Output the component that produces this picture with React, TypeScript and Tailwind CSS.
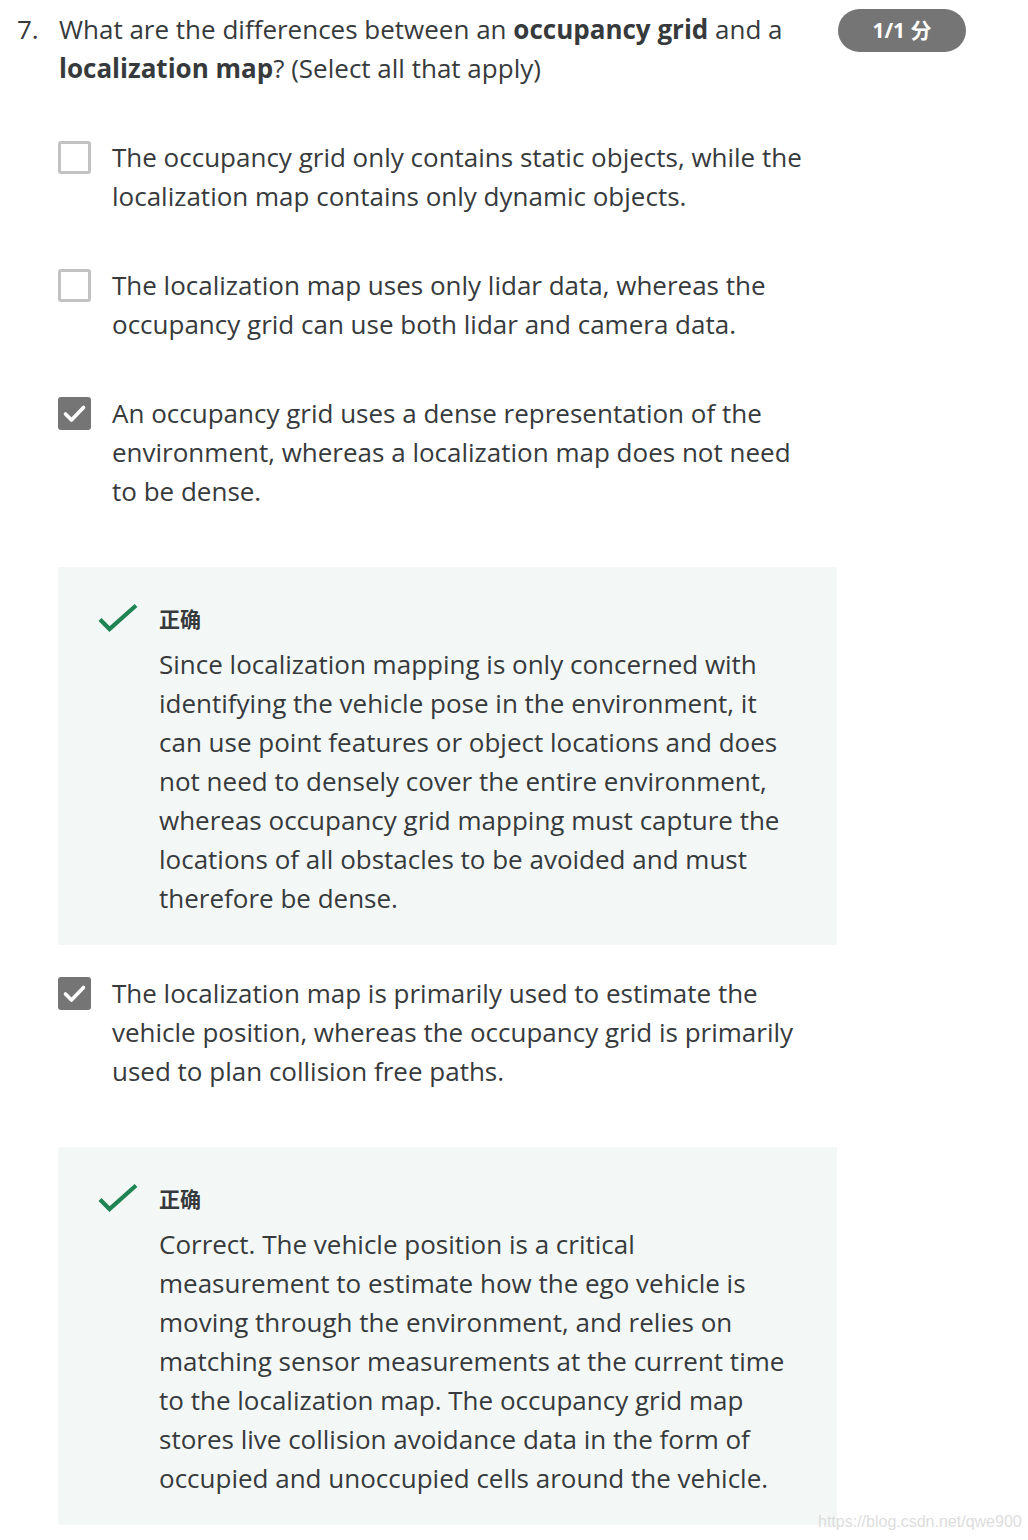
import React from "react";

type Option = {
    text: string;
    checked: boolean;
    feedback?: string;
};

const options: Option[] = [
    {
        text: "The occupancy grid only contains static objects, while the localization map contains only dynamic objects.",
        checked: false,
    },
    {
        text: "The localization map uses only lidar data, whereas the occupancy grid can use both lidar and camera data.",
        checked: false,
    },
    {
        text: "An occupancy grid uses a dense representation of the environment, whereas a localization map does not need to be dense.",
        checked: true,
        feedback:
            "Since localization mapping is only concerned with identifying the vehicle pose in the environment, it can use point features or object locations and does not need to densely cover the entire environment, whereas occupancy grid mapping must capture the locations of all obstacles to be avoided and must therefore be dense.",
    },
    {
        text: "The localization map is primarily used to estimate the vehicle position, whereas the occupancy grid is primarily used to plan collision free paths.",
        checked: true,
        feedback:
            "Correct. The vehicle position is a critical measurement to estimate how the ego vehicle is moving through the environment, and relies on matching sensor measurements at the current time to the localization map. The occupancy grid map stores live collision avoidance data in the form of occupied and unoccupied cells around the vehicle.",
    },
];

const Checkbox = ({checked}: {checked: boolean}) => {
    if (!checked)
        return <div className="w-[33px] h-[33px] shrink-0 rounded-[3px] border-[3px] border-[#c2c2c2] bg-white"/>;
    return (
        <div className="w-[33px] h-[33px] shrink-0 rounded-[3px] bg-[#757575] flex items-center justify-center">
            <svg width="33" height="33" viewBox="0 0 33 33" fill="none">
                <path d="M7.5 17L13.5 23L25.5 10.5" stroke="white" strokeWidth="3.6" strokeLinecap="round" strokeLinejoin="round"/>
            </svg>
        </div>
    );
};

const Feedback = ({text}: {text: string}) => (
    <div className="mt-[56px] w-[779px] bg-[#f3f8f6] pl-[40px] pt-[30px] pb-[27px]">
        <div className="flex h-[44px] items-center">
            <div className="w-[61px] shrink-0">
                <svg width="40" height="32" viewBox="0 0 40 32" fill="none">
                    <path d="M2 16.5L11.5 26L38 2.5" stroke="#1f8354" strokeWidth="4.2"/>
                </svg>
            </div>
            <span className="text-[21px] font-bold text-[#373a3c] [font-family:'Noto_Sans_CJK_SC',sans-serif]">正确</span>
        </div>
        <p className="mt-[4px] ml-[61px] w-[634px] text-[26px] leading-[39px] text-[#373a3c]">{text}</p>
    </div>
);

export default function App() {
    return (
        <div className="relative min-h-[1540px] bg-white [font-family:'Open_Sans','Noto_Sans_CJK_SC',sans-serif] text-[#373a3c]">
            <div className="pt-[10px] pl-[17px]">
                <div className="flex items-start">
                    <span className="w-[42px] shrink-0 text-[26px] leading-[39px]">7.</span>
                    <p className="w-[753px] text-[26px] leading-[39px]">
                        What are the differences between an <b className="font-bold">occupancy grid</b> and a <b className="font-bold">localization map</b>? (Select all that apply)
                    </p>
                    <div className="ml-[26px] mt-[-1px] h-[43px] w-[128px] rounded-full bg-[#757575] flex items-center justify-center text-white font-bold text-[21px]">
                        1/1 分
                    </div>
                </div>

                <div className="pl-[41px]">
                    {options.map((o, i) => (
                        <div key={i}>
                            <div className={`flex items-start gap-[21px] ${i > 0 && options[i - 1].feedback ? "mt-[29px]" : "mt-[50px]"}`}>
                                <div className="pt-[3px]">
                                    <Checkbox checked={o.checked}/>
                                </div>
                                <p className="w-[700px] text-[26px] leading-[39px]">{o.text}</p>
                            </div>
                            {o.feedback && <Feedback text={o.feedback}/>}
                        </div>
                    ))}
                </div>
            </div>
            <div className="absolute left-[818px] top-[1510px] text-[16px] text-[#dddddd] [font-family:'Liberation_Sans',sans-serif]">
                https://blog.csdn.net/qwe900
            </div>
        </div>
    );
}
